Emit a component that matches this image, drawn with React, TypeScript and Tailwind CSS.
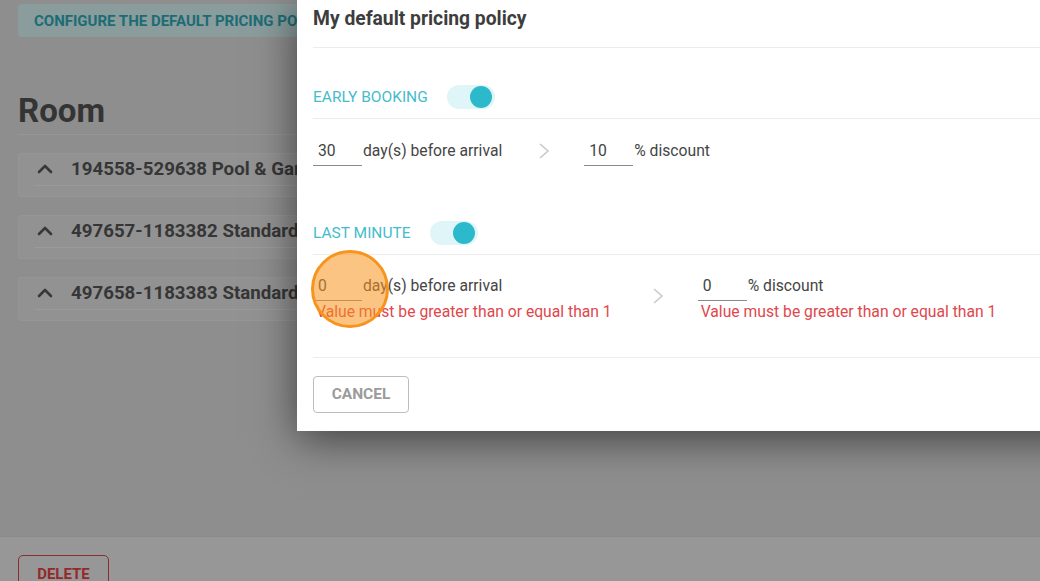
import React from 'react';
import { ChevronUp } from 'lucide-react';

const rooms = [
  '194558-529638 Pool & Garden View Suite',
  '497657-1183382 Standard Double Room',
  '497658-1183383 Standard Twin Room',
];

const Toggle: React.FC = () => (
  <div className="relative w-[48px] h-[24px] rounded-full bg-[#e0f5f7] flex items-center justify-end pr-[3px]">
    <div className="w-[22px] h-[22px] rounded-full bg-[#2cb9cc]" />
  </div>
);

const Chevron: React.FC = () => (
  <svg width="12" height="16" viewBox="0 0 12 16" className="shrink-0">
    <polyline points="2,1 10,8 2,15" fill="none" stroke="#c9c9c9" strokeWidth="1.6" />
  </svg>
);

const NumInput: React.FC<{ value: string }> = ({ value }) => (
  <div className="w-[49px] h-[30px] border-b border-[#8a8a8a] flex items-center pl-[5px] text-[15.7px] text-[#444]">
    {value}
  </div>
);

const Field: React.FC<{ value: string; unit: string; error?: string }> = ({ value, unit, error }) => (
  <div className="flex flex-col">
    <div className="flex items-center">
      <NumInput value={value} />
      <span className="ml-[1px] text-[15.7px] text-[#454545]">{unit}</span>
    </div>
    {error && <div className="mt-[2px] pl-[3px] text-[15.7px] leading-[18px] text-[#e0474c]">{error}</div>}
  </div>
);

const SectionHead: React.FC<{ label: string }> = ({ label }) => (
  <div className="flex items-center gap-[19px] pt-[37px] pb-[9px] border-b border-[#ececec]">
    <span className="translate-y-px text-[15.5px] text-[#45bccb] uppercase">{label}</span>
    <Toggle />
  </div>
);

const err = 'Value must be greater than or equal than 1';

export default function App() {
  return (
    <div className="relative w-[1040px] h-[581px] overflow-hidden bg-[#8e8e8e] font-['Roboto',sans-serif]">
      {/* page under the overlay */}
      <div className="flex flex-col h-full">
        <div className="px-[18px] pt-[4px]">
          <div className="h-[33px] rounded-[4px] bg-[#8a9c9c] flex items-center pl-[16px] pt-[2px] text-[15px] font-bold text-[#1c6c76] uppercase whitespace-nowrap">
            Configure the default pricing policy for all rooms
          </div>
        </div>
        <div className="px-[18px] pt-[55px]">
          <h1 className="text-[33px] font-bold text-[#343434] leading-[38px] pb-[4px] border-b border-[#969696]">Room</h1>
          <div className="flex flex-col gap-[18px] pt-[18px]">
            {rooms.map((r) => (
              <div key={r} className="h-[44px] rounded-[3px] bg-[#929292] border border-[#969696] px-[15px] pb-[10px]">
                <div className="flex items-center h-[32px] pb-[1px] border-b border-[#9a9a9a] whitespace-nowrap">
                  <ChevronUp className="w-[24px] h-[24px] text-[#383838] ml-[-1px]" strokeWidth={2.6} />
                  <span className="ml-[14px] text-[18.7px] font-bold text-[#363636]">{r}</span>
                </div>
              </div>
            ))}
          </div>
        </div>
        <div className="mt-auto h-[45px] bg-[#979797] border-t border-[#8a8a8a] px-[18px] pt-[18px]">
          <div className="w-[91px] h-[40px] rounded-[5px] border border-[#8d2c2c] flex items-start justify-center pt-[7px] text-[15px] font-bold text-[#932a2a]">
            DELETE
          </div>
        </div>
      </div>

      {/* dialog */}
      <div className="absolute left-[297px] top-0 w-[800px] bg-white pl-[16px] shadow-[0_8px_40px_rgba(0,0,0,0.55)]">
        <div className="h-[48px] pt-[8px] border-b border-[#ececec]">
          <h2 className="text-[19.3px] font-bold leading-[22px] text-[#3d3d3d]">My default pricing policy</h2>
        </div>

        <SectionHead label="Early booking" />
        <div className="flex items-center pt-[17px] pb-[18px]">
          <Field value="30" unit="day(s) before arrival" />
          <div className="ml-[36px] mr-[34px]"><Chevron /></div>
          <Field value="10" unit="% discount" />
        </div>

        <SectionHead label="Last minute" />
        <div className="flex items-center pt-[16px] pb-[36px] border-b border-[#ececec]">
          <Field value="0" unit="day(s) before arrival" error={err} />
          <div className="ml-[40px] mr-[34px]"><Chevron /></div>
          <Field value="0" unit="% discount" error={err} />
        </div>

        <div className="pt-[18px] pb-[18px]">
          <div className="w-[96px] h-[37px] rounded-[4px] border border-[#bdbdbd] flex items-center justify-center pt-[1px] text-[15.5px] font-bold text-[#9b9b9b]">
            CANCEL
          </div>
        </div>
      </div>

      {/* click marker */}
      <div className="absolute left-[311px] top-[250px] w-[78px] h-[78px] rounded-full border-[3px] border-[#f7941d] bg-[#f7941d]/55" />
    </div>
  );
}
